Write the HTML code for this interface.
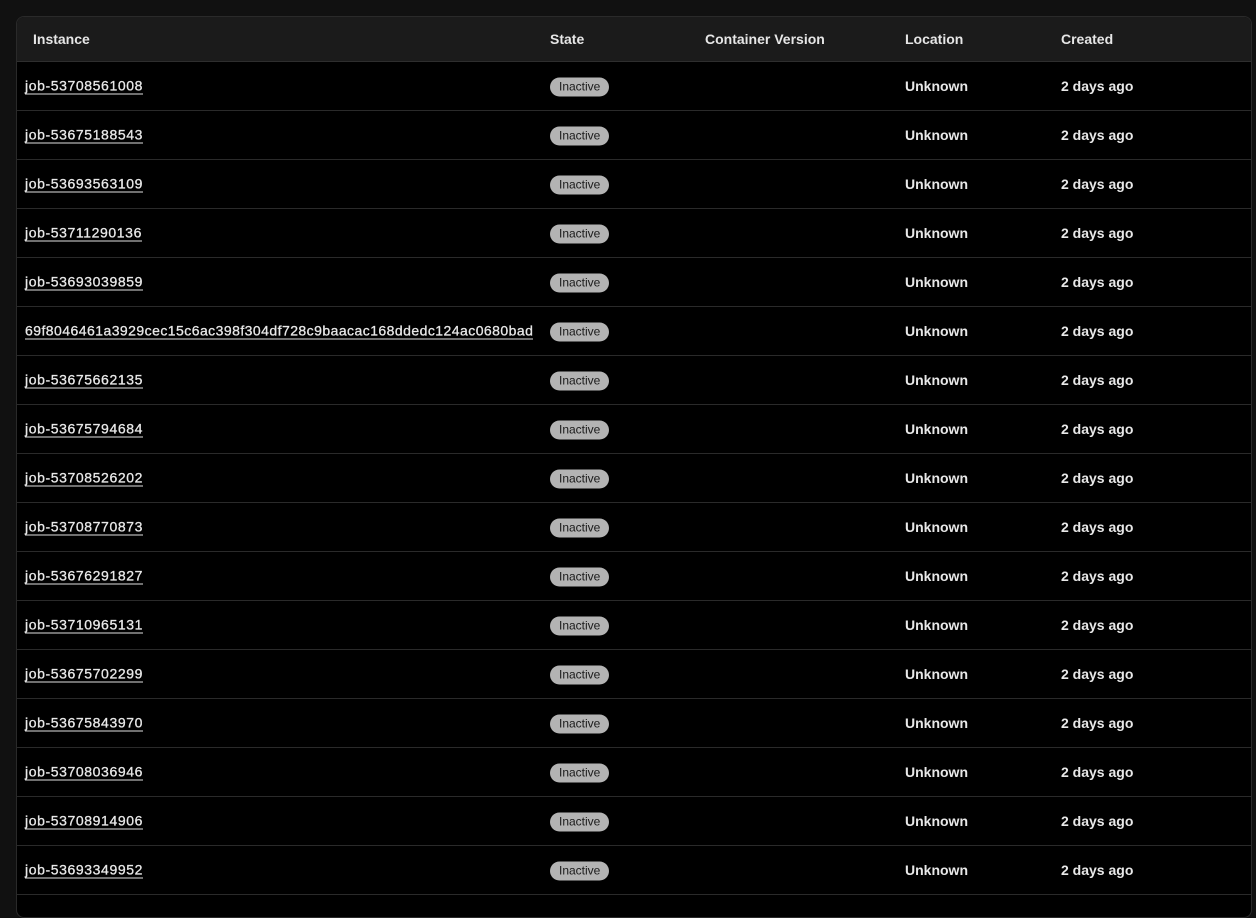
<!DOCTYPE html><html><head><style>
body{margin:0;background:#111;font-family:"Liberation Sans",sans-serif;width:1256px;height:898px;overflow:hidden}
.card{position:absolute;left:16px;top:16px;width:1234px;height:900px;border:1px solid #2a2a2a;border-radius:8px;background:#000;overflow:hidden}
.hd{height:44px;background:#1b1b1b;border-bottom:1px solid #2e2e2e;position:relative;color:#e6e6e6;font-weight:bold;font-size:14px}
.hd span,.r span{position:absolute;top:50%;transform:translateY(-50%)}
.r{height:48px;border-bottom:1px solid #2a2a2a;position:relative;color:#e8e8e8;font-size:14px;font-weight:bold}
.r a{position:absolute;left:8px;top:50%;transform:translateY(-50%);color:#e8e8e8;text-decoration:none;border-bottom:1px solid #e0e0e0;line-height:16px;letter-spacing:0.6px;white-space:nowrap;font-weight:normal;-webkit-text-stroke:0.3px #e8e8e8}
.r .b{left:533px;margin-top:1px;background:#b3b3b3;color:#1a1a1a;font-size:12px;font-weight:normal;border-radius:10px;padding:2px 9px;line-height:15px}
.l{left:888px}.c{left:1044px}
</style></head><body><div class="card">
<div class="hd"><span style="left:16px">Instance</span><span style="left:533px">State</span><span style="left:688px">Container Version</span><span style="left:888px">Location</span><span style="left:1044px">Created</span></div>
<div class="r"><a>job-53708561008</a><span class="b">Inactive</span><span class="l">Unknown</span><span class="c">2 days ago</span></div>
<div class="r"><a>job-53675188543</a><span class="b">Inactive</span><span class="l">Unknown</span><span class="c">2 days ago</span></div>
<div class="r"><a>job-53693563109</a><span class="b">Inactive</span><span class="l">Unknown</span><span class="c">2 days ago</span></div>
<div class="r"><a>job-53711290136</a><span class="b">Inactive</span><span class="l">Unknown</span><span class="c">2 days ago</span></div>
<div class="r"><a>job-53693039859</a><span class="b">Inactive</span><span class="l">Unknown</span><span class="c">2 days ago</span></div>
<div class="r"><a style="letter-spacing:0.45px">69f8046461a3929cec15c6ac398f304df728c9baacac168ddedc124ac0680bad</a><span class="b">Inactive</span><span class="l">Unknown</span><span class="c">2 days ago</span></div>
<div class="r"><a>job-53675662135</a><span class="b">Inactive</span><span class="l">Unknown</span><span class="c">2 days ago</span></div>
<div class="r"><a>job-53675794684</a><span class="b">Inactive</span><span class="l">Unknown</span><span class="c">2 days ago</span></div>
<div class="r"><a>job-53708526202</a><span class="b">Inactive</span><span class="l">Unknown</span><span class="c">2 days ago</span></div>
<div class="r"><a>job-53708770873</a><span class="b">Inactive</span><span class="l">Unknown</span><span class="c">2 days ago</span></div>
<div class="r"><a>job-53676291827</a><span class="b">Inactive</span><span class="l">Unknown</span><span class="c">2 days ago</span></div>
<div class="r"><a>job-53710965131</a><span class="b">Inactive</span><span class="l">Unknown</span><span class="c">2 days ago</span></div>
<div class="r"><a>job-53675702299</a><span class="b">Inactive</span><span class="l">Unknown</span><span class="c">2 days ago</span></div>
<div class="r"><a>job-53675843970</a><span class="b">Inactive</span><span class="l">Unknown</span><span class="c">2 days ago</span></div>
<div class="r"><a>job-53708036946</a><span class="b">Inactive</span><span class="l">Unknown</span><span class="c">2 days ago</span></div>
<div class="r"><a>job-53708914906</a><span class="b">Inactive</span><span class="l">Unknown</span><span class="c">2 days ago</span></div>
<div class="r"><a>job-53693349952</a><span class="b">Inactive</span><span class="l">Unknown</span><span class="c">2 days ago</span></div>
</div></body></html>
